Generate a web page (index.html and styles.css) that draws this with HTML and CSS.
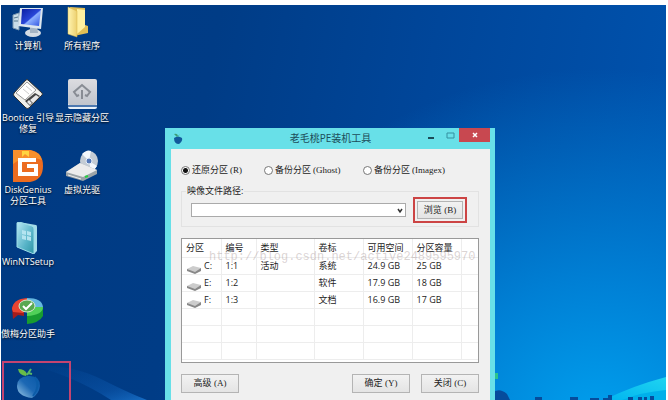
FILE: index.html
```html
<!DOCTYPE html>
<html lang="zh-CN">

<head>
  <meta charset="UTF-8">
  <meta name="viewport" content="width=device-width, initial-scale=1.0">
  <title>老毛桃PE装机工具</title>
  <link rel="stylesheet" href="styles.css">
</head>

<body>
  <main class="desktop">
    <svg class="wallpaper-left" viewBox="0 0 165 45" aria-hidden="true">
      <defs>
        <linearGradient id="ray" x1="0" y1="0" x2="1" y2="1">
          <stop offset="0" stop-color="#0a5cb4" stop-opacity="0"/>
          <stop offset="0.7" stop-color="#1468c4" stop-opacity="0.5"/>
          <stop offset="1" stop-color="#2080dc"/>
        </linearGradient>
      </defs>
      <path d="M30 10Q70 9 100 24T146 45H110Q75 22 30 10z" fill="url(#ray)" opacity="0.7"/>
    </svg>
    <svg class="wallpaper-right" viewBox="0 0 174 32" aria-hidden="true">
      <defs>
        <linearGradient id="wave" x1="0" y1="1" x2="1" y2="0">
          <stop offset="0" stop-color="#00b4f0"/>
          <stop offset="1" stop-color="#20d4f0"/>
        </linearGradient>
      </defs>
      <path d="M112 32Q140 18 174 9V32z" fill="url(#wave)"/>
      <path d="M130 32Q150 24 174 22V32z" fill="#00b0ea"/>
      <path d="M0 5h6v6H3v12H0z" fill="#2cc48c"/>
      <path d="M0 32v-7q7-6 15 1l3 6z" fill="#064c9c"/>
      <path d="M43 29h7v3h-7zM78 29h8v3h-8zM98 30h9v2h-9zM116 27h4v5h-9v-2h5zM136 29h5v3h-5zM146 29h4v3h-4zM152 29h3v3h-3zM158 28h4v4h-4z" fill="#064c9c"/>
    </svg>

    <ul class="icons">
      <li>
        <a class="shortcut" href="#">
          <svg viewBox="0 0 32 32" aria-hidden="true">
            <defs>
              <linearGradient id="screen" x1="0" y1="0" x2="1" y2="1">
                <stop offset="0" stop-color="#0a1ea0"/>
                <stop offset="0.5" stop-color="#2846d8"/>
                <stop offset="0.55" stop-color="#8cb0ff"/>
                <stop offset="1" stop-color="#2c50e0"/>
              </linearGradient>
            </defs>
            <path d="M1 9l6-2v17l-6-2z" fill="#c8dce8" stroke="#7c98b0"/>
            <path d="M2 12l4-1M2 15h4" stroke="#58788c"/>
            <ellipse cx="21" cy="27" rx="8" ry="4" fill="#d4dce4"/>
            <path d="M18 20h7l1 7h-8z" fill="#a4b4c4"/>
            <path d="M8 2l23 0-2 21-23-3z" fill="#dce6ee"/>
            <path d="M10 3l19 0-2 17-18-2z" fill="url(#screen)"/>
          </svg>
          <span>计算机</span>
        </a>
      </li>
      <li>
        <a class="shortcut" href="#">
          <svg viewBox="0 0 32 32" aria-hidden="true">
            <defs>
              <linearGradient id="folder">
                <stop offset="0" stop-color="#fff4b0"/>
                <stop offset="1" stop-color="#ecd070"/>
              </linearGradient>
            </defs>
            <path d="M4 1l15 1v17l3 1v7l-14 3z" fill="#e2bf55"/>
            <path d="M11 3l8 1v17l-8 7z" fill="#fff0a0"/>
            <path d="M2 1l9 4v26L2 28z" fill="url(#folder)" stroke="#d8b448" stroke-width="0.5"/>
          </svg>
          <span>所有程序</span>
        </a>
      </li>
      <li>
        <a class="shortcut" href="#">
          <svg viewBox="0 0 32 32" aria-hidden="true">
            <path d="M14 2q1-1 2 0l14 13q1 1 0 2L17 30q-2 1-3 0L2 18q-1-1 0-3z" fill="#f0f0ec" stroke="#333"/>
            <path d="M15 4l9 8-11 10-9-7z" fill="#fff" stroke="#999"/>
            <path d="M14 8l6 5M11 11l6 5" stroke="#ccc"/>
            <path d="M23 15l5 3-10 10-5-5z" fill="#444"/>
            <path d="M24 17l3 2-6 6-3-3zM17 22l3 3-2 2-3-3z" fill="#e8e8e8"/>
          </svg>
          <span>Bootice 引导修复</span>
        </a>
      </li>
      <li>
        <a class="shortcut" href="#">
          <svg viewBox="0 0 32 32" aria-hidden="true">
            <defs>
              <linearGradient id="tile" x2="0" y2="1">
                <stop offset="0" stop-color="#dcdce0"/>
                <stop offset="1" stop-color="#c0c4cc"/>
              </linearGradient>
            </defs>
            <rect x="2" y="3" width="29" height="28" rx="2" fill="#e8f0f8"/>
            <rect x="2" y="27" width="29" height="2" fill="#4c78b0"/>
            <rect x="2" y="1" width="29" height="26" rx="2" fill="url(#tile)"/>
            <path d="M13 17l-2 1-3-4 8-7 8 7-3 4-2-1M16 12v9" fill="none" stroke="#888c94" stroke-width="2"/>
          </svg>
          <span>显示隐藏分区</span>
        </a>
      </li>
      <li>
        <a class="shortcut" href="#">
          <svg viewBox="0 0 32 32" aria-hidden="true">
            <path d="M1 0h17q13 2 13 16T18 32H1z" fill="#ec6c20"/>
            <path d="M1 0h17q10 2 12 10Q14 4 1 14z" fill="#f8902c"/>
            <path d="M10 1h7v6l-4-3-3 3z" fill="#ffd440"/>
            <path d="M24 10H8v14h16v-8h-9" fill="none" stroke="#fff" stroke-width="4"/>
          </svg>
          <span>DiskGenius 分区工具</span>
        </a>
      </li>
      <li>
        <a class="shortcut" href="#">
          <svg viewBox="0 0 32 32" aria-hidden="true">
            <ellipse cx="23" cy="11" rx="9" ry="10" fill="#c4ccd4"/>
            <path d="M23 11L16 4q5-5 9-3zM23 11l8 5q-3 5-6 5z" fill="#f4f8fc"/>
            <circle cx="23" cy="11" r="3" fill="#5478b8" stroke="#e8f0f8"/>
            <path d="M0 22l14-9 17 7v4l-14 7L0 26z" fill="#9ca4a8"/>
            <path d="M0 22l14-9 17 7-14 7z" fill="#ececec"/>
            <path d="M2 25l13 4" stroke="#eee"/>
            <path d="M19 27l3-1" stroke="#28d040" stroke-width="2"/>
          </svg>
          <span>虚拟光驱</span>
        </a>
      </li>
      <li>
        <a class="shortcut" href="#">
          <svg viewBox="0 0 32 32" aria-hidden="true">
            <defs>
              <linearGradient id="box" x2="1" y2="1">
                <stop offset="0" stop-color="#b8e8f4"/>
                <stop offset="0.6" stop-color="#58b4c8"/>
                <stop offset="1" stop-color="#2c94a4"/>
              </linearGradient>
            </defs>
            <path d="M7 0l17 3q1 0 1 2v24l-3 3V7z" fill="#a4dce8"/>
            <path d="M5 1q0-1 2-1l13 4q2 1 2 3v25L5 25z" fill="url(#box)" stroke="#9cdce8"/>
            <path d="M10 8l4 1v4l-4-1zM15 9l4 1v4l-4-1zM10 13l4 1v4l-4-1zM15 14l4 1v4l-4-1z" fill="#b4e4f0"/>
          </svg>
          <span>WinNTSetup</span>
        </a>
      </li>
      <li class="first-column">
        <a class="shortcut" href="#">
          <svg viewBox="0 0 32 32" aria-hidden="true">
            <path d="M31 13v9q-4 7-16 8v-9z" fill="#189c30"/>
            <path d="M0 13l12 3v6l-6-1-5 4z" fill="#a41c1c"/>
            <path d="M0 15Q1 5 15 4v10l-4 5-10-1z" fill="#e84430"/>
            <path d="M15 4q15 0 16 9l-16 2z" fill="#64b8e0"/>
            <path d="M31 13q0 8-16 9v-9z" fill="#50d058"/>
            <ellipse cx="15" cy="12" rx="8" ry="6" fill="#58a850" stroke="#d8e8d0"/>
            <path d="M11 12l3 3 6-6" fill="none" stroke="#fff" stroke-width="2"/>
          </svg>
          <span>傲梅分区助手</span>
        </a>
      </li>
      <li class="first-column">
        <a class="shortcut shortcut-marked" href="#" aria-label="老毛桃PE装机工具">
          <svg viewBox="0 0 32 32" aria-hidden="true">
            <defs>
              <linearGradient id="peach" x1="1" x2="0" y2="1">
                <stop offset="0" stop-color="#0858a8"/>
                <stop offset="0.5" stop-color="#1c68b4"/>
                <stop offset="1" stop-color="#a0cce8"/>
              </linearGradient>
            </defs>
            <path d="M16 9Q28 8 28 19 27 27 20 31 5 29 5 19 5 10 16 9z" fill="url(#peach)"/>
            <path d="M23 10q6 9-2 19" fill="none" stroke="#0c5ca8" stroke-width="2"/>
            <path d="M14 9Q7 8 6 2q7 0 9 5z" fill="#68bc48"/>
            <path d="M15 8l4-6M16 6l4 1" fill="none" stroke="#58b868" stroke-width="2"/>
          </svg>
        </a>
      </li>
    </ul>

    <section class="window" aria-labelledby="window-title">
      <header class="title-bar">
        <svg class="title-icon" viewBox="0 0 10 12" aria-hidden="true">
          <path d="M1 5q4-3 8 0 1 3-3 6-5 0-5-6z" fill="#125a9c"/>
          <path d="M4 4L1 1q4-1 4 3l2-3" fill="#3c9c78"/>
        </svg>
        <h1 id="window-title">老毛桃PE装机工具</h1>
        <div class="window-controls">
          <button class="control" type="button" aria-label="最小化">
            <svg viewBox="0 0 10 10" aria-hidden="true"><path d="M2 8h6" stroke="#1c4c58" stroke-width="2"/></svg>
          </button>
          <button class="control" type="button" aria-label="最大化">
            <svg viewBox="0 0 10 10" aria-hidden="true"><path d="M2 3h7v5H2z" fill="none" stroke="#3490a0"/></svg>
          </button>
          <button class="control control-close" type="button" aria-label="关闭">
            <svg viewBox="0 0 10 10" aria-hidden="true"><path d="M3 3l4 4M7 3L3 7" stroke="#fff" stroke-width="1.5"/></svg>
          </button>
        </div>
      </header>

      <form class="window-body">
        <div class="modes">
          <label><input type="radio" name="mode" checked>还原分区 <span class="key">(R)</span></label>
          <label><input type="radio" name="mode">备份分区 <span class="key">(Ghost)</span></label>
          <label><input type="radio" name="mode">备份分区 <span class="key">(Imagex)</span></label>
        </div>

        <fieldset class="path">
          <legend><label for="path">映像文件路径:</label></legend>
          <div class="path-row">
            <div class="select-box">
              <select id="path"><option></option></select>
              <svg viewBox="0 0 8 8" aria-hidden="true"><path d="M2 3l2 3 2-3" fill="none" stroke="#333" stroke-width="1.5"/></svg>
            </div>
            <div class="marked">
              <button class="btn" type="button">浏览 <span class="key">(B)</span></button>
            </div>
          </div>
        </fieldset>

        <div class="partitions">
          <table>
            <colgroup>
              <col class="col-drive"><col class="col-number"><col class="col-type"><col class="col-label"><col class="col-size"><col class="col-size"><col>
            </colgroup>
            <thead>
              <tr><th>分区</th><th>编号</th><th>类型</th><th>卷标</th><th>可用空间</th><th>分区容量</th><th></th></tr>
            </thead>
            <tbody>
              <tr>
                <td><span class="drive"><svg viewBox="0 0 16 10" aria-hidden="true"><path d="M1 5v2l8 3 6-3V4z" fill="#888"/><path d="M1 5l6-3 8 2-6 4z" fill="#ccc"/></svg>C:</span></td>
                <td>1:1</td><td>活动</td><td>系统</td><td>24.9 GB</td><td>25 GB</td><td></td>
              </tr>
              <tr>
                <td><span class="drive"><svg viewBox="0 0 16 10" aria-hidden="true"><path d="M1 5v2l8 3 6-3V4z" fill="#888"/><path d="M1 5l6-3 8 2-6 4z" fill="#ccc"/></svg>E:</span></td>
                <td>1:2</td><td></td><td>软件</td><td>17.9 GB</td><td>18 GB</td><td></td>
              </tr>
              <tr>
                <td><span class="drive"><svg viewBox="0 0 16 10" aria-hidden="true"><path d="M1 5v2l8 3 6-3V4z" fill="#888"/><path d="M1 5l6-3 8 2-6 4z" fill="#ccc"/></svg>F:</span></td>
                <td>1:3</td><td></td><td>文档</td><td>16.9 GB</td><td>17 GB</td><td></td>
              </tr>
              <tr><td></td><td></td><td></td><td></td><td></td><td></td><td></td></tr>
              <tr><td></td><td></td><td></td><td></td><td></td><td></td><td></td></tr>
              <tr><td></td><td></td><td></td><td></td><td></td><td></td><td></td></tr>
            </tbody>
          </table>
          <span class="watermark">http://blog.csdn.net/active2489595970</span>
        </div>

        <div class="actions">
          <button class="btn" type="button">高级 <span class="key">(A)</span></button>
          <button class="btn btn-ok" type="button">确定 <span class="key">(Y)</span></button>
          <button class="btn" type="button">关闭 <span class="key">(C)</span></button>
        </div>
      </form>
    </section>
  </main>
</body>

</html>
```

FILE: styles.css
```css
/* ---- General ---- */

:root {
  --text: #222;
  --line: #ededed;
  --frame: #68e0e8;
  --marker: #c44470;
}

* {
  box-sizing: border-box;
}

body {
  height: 100vh;
  margin: 0;
  padding: 5px 2px 0 1px;
  background: #fff;
  font-family: "Open Sans", "Noto Sans CJK SC", sans-serif;
  font-size: 9px;
  color: var(--text);
  overflow: hidden;
}

/* ---- Desktop ---- */

.desktop {
  position: relative;
  height: 100%;
  background:
    radial-gradient(ellipse 60% 90% at 90% 106%, #00a0ee 0%, rgba(0, 140, 224, 0.8) 40%, rgba(0, 110, 200, 0) 100%),
    linear-gradient(100deg, #003a82 0%, #003c86 30%, #00469a 60%, #0054b0 100%);
  overflow: hidden;
}

.wallpaper-left,
.wallpaper-right {
  position: absolute;
  bottom: 0;
}

.wallpaper-left {
  left: 0;
  width: 165px;
}

.wallpaper-right {
  right: 0;
  width: 174px;
}

.icons {
  position: relative;
  display: grid;
  grid-template-columns: 54px 54px;
  grid-auto-rows: 72px;
  margin: 0;
  padding: 1px 0 0;
  list-style: none;
}

.first-column {
  grid-column: 1;
}

.shortcut {
  display: flex;
  flex-direction: column;
  align-items: center;
  gap: 2px;
  line-height: 11px;
  text-align: center;
  text-decoration: none;
  text-shadow: 0 1px 2px #000;
  color: #fff;
}

.shortcut svg {
  width: 32px;
  height: 32px;
}

.shortcut-marked {
  width: 69px;
  height: 60px;
  margin: -5px 0 0 1px;
  padding: 4px 8px;
  align-items: flex-start;
  border: 2px solid var(--marker);
}

/* ---- Window ---- */

.window {
  position: absolute;
  top: 123px;
  left: 164px;
  width: 330px;
  padding: 0 5px 6px 6px;
  background: var(--frame);
}

.title-bar {
  display: grid;
  grid-template-columns: 72px 1fr 72px;
  height: 21px;
}

.title-icon {
  align-self: center;
  width: 10px;
  height: 12px;
  margin-left: 2px;
}

.title-bar h1 {
  margin: 0;
  font-size: 10px;
  font-weight: 400;
  line-height: 21px;
  text-align: center;
  white-space: nowrap;
  color: #1c4c58;
}

.window-controls {
  display: flex;
  justify-content: flex-end;
}

.control {
  width: 19px;
  height: 14px;
  padding: 0;
  border: 0;
  background: none;
}

.control svg {
  display: block;
  width: 10px;
  height: 10px;
  margin: auto;
}

.control-close {
  width: 31px;
  background: #c84850;
}

.window-body {
  padding: 14px 11px 12px 10px;
  background: #f0f0f0;
}

.key {
  font-family: "Liberation Serif", serif;
}

/* ---- Options ---- */

.modes {
  display: grid;
  grid-template-columns: 83px 99px 1fr;
  height: 14px;
  line-height: 14px;
}

.modes label {
  display: flex;
  align-items: center;
  gap: 2px;
  white-space: nowrap;
}

.modes input {
  appearance: none;
  width: 9px;
  height: 9px;
  margin: 0;
  border: 1px solid #777;
  border-radius: 50%;
  background: #fff;
}

.modes input:checked {
  background: radial-gradient(circle, #111 0 2px, #fff 3px);
}

.path {
  margin: 8px 0 0;
  padding: 0 11px 3px 9px;
  border: 1px solid #e2e2e2;
}

.path legend {
  margin-left: -5px;
  padding: 0 1px;
  line-height: 12px;
}

.path-row {
  display: flex;
  align-items: center;
  gap: 7px;
}

.select-box {
  position: relative;
  flex: 1;
}

.select-box select {
  appearance: none;
  display: block;
  width: 100%;
  height: 14px;
  padding: 0;
  border: 1px solid #aaa;
  background: #fff;
}

.select-box svg {
  position: absolute;
  top: 3px;
  right: 2px;
  width: 8px;
  height: 8px;
}

.marked {
  padding: 2px;
  border: 2px solid #cc4444;
}

.btn {
  width: 58px;
  height: 19px;
  padding: 0;
  border: 1px solid #b4b4b4;
  background: linear-gradient(#f2f2f2, #e4e4e4);
  font: inherit;
  line-height: 16px;
  white-space: nowrap;
  color: var(--text);
}

.marked .btn {
  display: block;
  width: 46px;
  height: 18px;
}

/* ---- Partitions ---- */

.partitions {
  position: relative;
  margin-top: 11px;
  padding-bottom: 2px;
  border: 1px solid #999;
  background: #fff;
}

.partitions table {
  width: 100%;
  table-layout: fixed;
  border-collapse: collapse;
}

.partitions th,
.partitions td {
  height: 17px;
  padding: 0 0 0 4px;
  border: 1px solid var(--line);
  border-width: 0 1px 1px 0;
  font-weight: 400;
  line-height: 16px;
  text-align: left;
  white-space: nowrap;
}

.partitions th {
  height: 18px;
  padding-top: 1px;
}

.partitions th:last-child,
.partitions td:last-child {
  border-right: 0;
}

.col-drive {
  width: 39px;
}

.col-number {
  width: 35px;
}

.col-type {
  width: 58px;
}

.col-label {
  width: 49px;
}

.col-size {
  width: 49px;
}

.drive {
  display: flex;
  align-items: flex-end;
  gap: 2px;
}

.drive svg {
  width: 16px;
  height: 10px;
}

.watermark {
  position: absolute;
  top: 9px;
  left: 27px;
  font-family: "Liberation Mono", monospace;
  font-size: 12px;
  line-height: 18px;
  color: rgba(150, 130, 130, 0.35);
  white-space: nowrap;
}

.actions {
  display: flex;
  gap: 11px;
  margin-top: 11px;
}

.btn-ok {
  margin-left: auto;
}
```
